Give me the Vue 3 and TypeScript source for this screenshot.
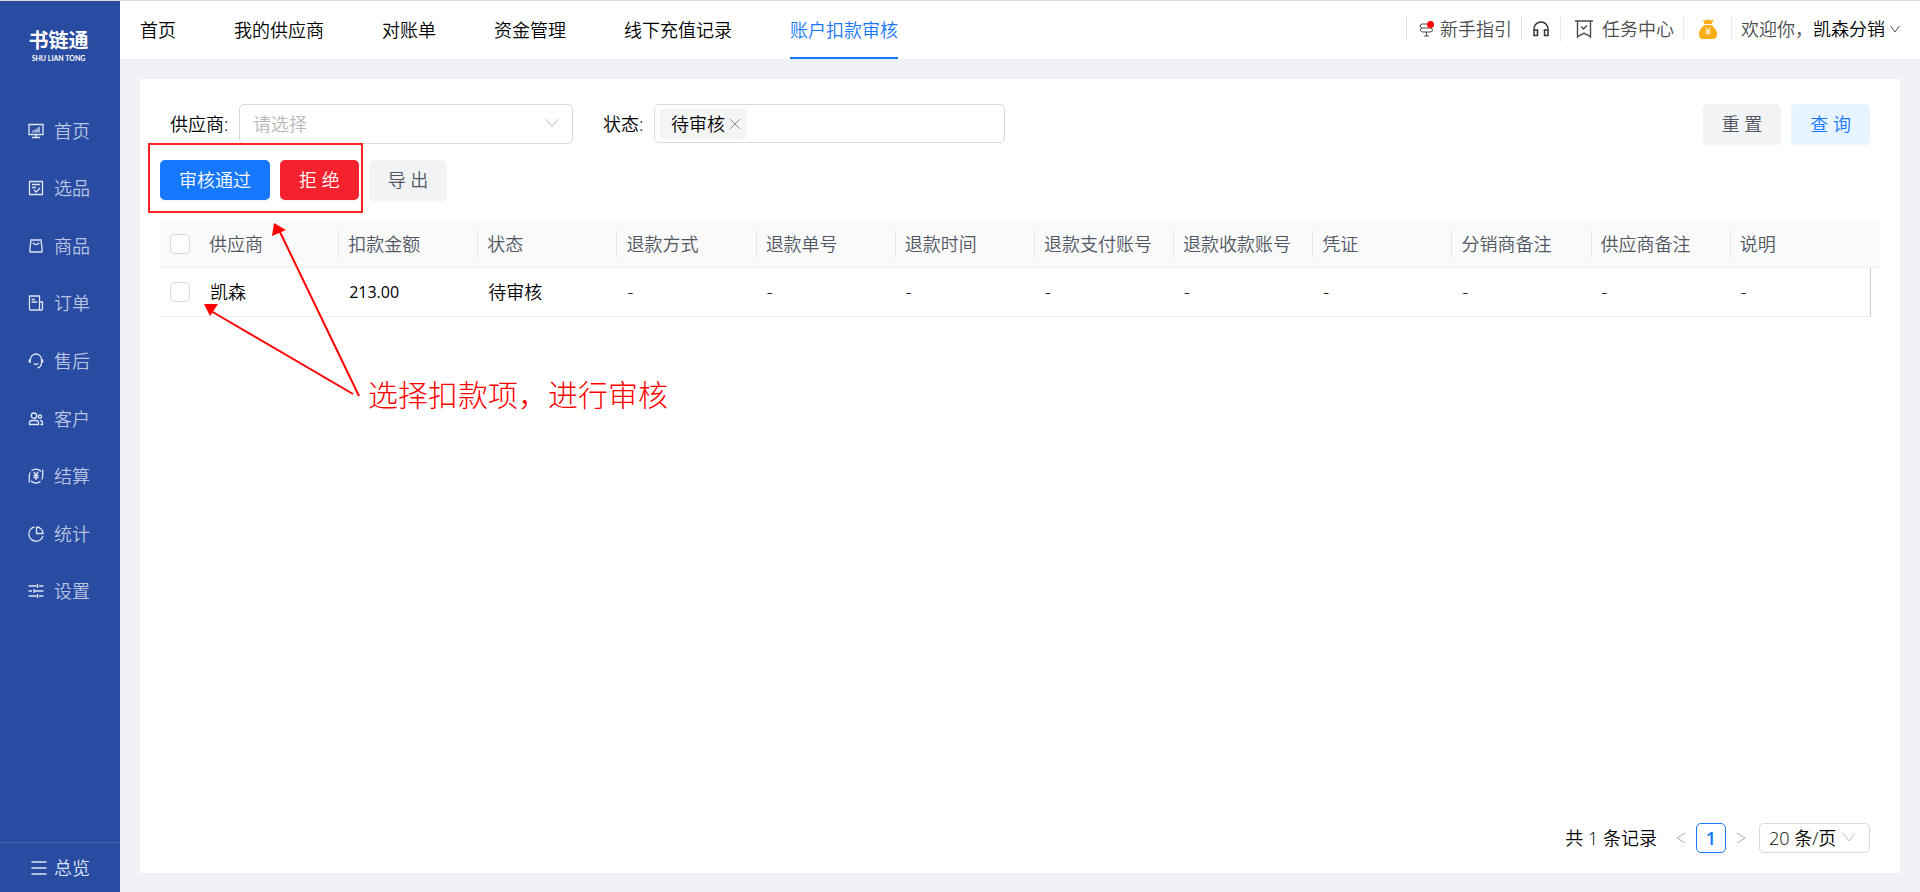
<script setup lang="ts">
import { ref } from 'vue'

interface MenuItem {
  label: string
  icon: string
}

const menu: MenuItem[] = [
  { label: '首页', icon: 'M1 1.500h14v10H1zM8 11.500v2.500M4 14.500h8M5 9.500V7.500M7 9.500V6.500M9 9.500V5.500M11 9.500V4' },
  { label: '选品', icon: 'M1.500 1.500h13v13h-13zM4 4.500h8M4 7.500h4M6 10l2.200 2L12 8' },
  { label: '商品', icon: 'M3 2h10l1.300 11q.1 1-.9 1H2.600q-1 0-.9-1zM4.800 4.800Q8 8.500 11.200 4.800' },
  { label: '订单', icon: 'M1.500 1h10v14H2.500q-1 0-1-1zM11.500 7h3v7q0 1-1 1h-2M3.700 4.500H7M3.700 7h5.600' },
  { label: '售后', icon: 'M2.500 6.500a5.500 5.500 0 0 1 11 0v3q0 4.500-4 5.500M1.300 6.500v3M2.200 6v4M13.800 6v4M14.700 6.500v3M5.700 10.500q2.300 1.800 4.600 0' },
  { label: '客户', icon: 'M6 2a2.700 2.700 0 1 1 0 5.400a2.700 2.700 0 1 1 0-5.400zM1.500 13.500v-1.500q0-2.500 2.500-2.500h4q2.500 0 2.500 2.500v1.500zM12 4a1.600 1.600 0 1 1 0 3.200a1.600 1.600 0 1 1 0-3.200M12.200 9.500q2.300.3 2.300 2.500v1.500h-2' },
  { label: '结算', icon: 'M3.500 2.700a6.800 6.800 0 0 1 9.500.8M14.700 1.500V8M1.300 8v6.500M3 12.800a6.800 6.800 0 0 0 9.500.5M1.300 8q0-2 1-3.500M14.700 8q0 2-1 3.500M5.800 4L8 7l2.200-3M8 7v5M5.500 7.500h5M5.500 9.500h5' },
  { label: '统计', icon: 'M6.500 1A7.200 7.200 0 1 0 15 9.800M8.500 1v6.500H15A6.500 6.500 0 0 0 8.500 1' },
  { label: '设置', icon: 'M.5 3h8M11 3h4.500M9.500 1v4M.5 8H4M6.500 8h9M6 6v4M.5 13h8M11 13h4.500M9.500 11v4' },
]

const tabs = ['首页', '我的供应商', '对账单', '资金管理', '线下充值记录', '账户扣款审核']
const activeTab = '账户扣款审核'

const columns = [
  '供应商', '扣款金额', '状态', '退款方式', '退款单号', '退款时间',
  '退款支付账号', '退款收款账号', '凭证', '分销商备注', '供应商备注', '说明',
]
const rows = [['凯森', '213.00', '待审核', '-', '-', '-', '-', '-', '-', '-', '-', '-']]

const supplier = ref('')
const pageSize = ref('20')
const checkedAll = ref(false)
const checked = ref<boolean[]>([false])
</script>

<template>
  <div class="page">
    <aside class="sidebar">
      <div class="logo">
        <span class="logo-name">书链通</span>
        <span class="logo-sub">SHU LIAN TONG</span>
      </div>
      <nav class="menu">
        <a v-for="item in menu" :key="item.label" href="#" class="menu-item">
          <svg class="menu-icon" viewBox="0 0 16 16"><path :d="item.icon" /></svg>
          <span>{{ item.label }}</span>
        </a>
      </nav>
      <a href="#" class="overview">
        <svg class="menu-icon" viewBox="0 0 16 16"><path d="M.5 2h15M.5 8h15M.5 14h15" /></svg>
        <span>总览</span>
      </a>
    </aside>

    <div class="main">
      <header class="header">
        <nav class="tabs">
          <a v-for="tab in tabs" :key="tab" href="#" class="tab" :class="{ active: tab === activeTab }">{{ tab }}</a>
        </nav>
        <div class="tools">
          <a href="#" class="tool guide">
            <svg class="guide-icon" viewBox="0 0 15 16">
              <path d="M12 3H3.500Q1 3 1 5t2.500 2H11q2.500 0 2.500 2T11 11H3L1 9l2-2M7.500 11v4M5 15h5" />
              <circle cx="11.500" cy="3.500" r="3.500" />
            </svg>
            <span>新手指引</span>
          </a>
          <a href="#" class="tool phones" aria-label="客服">
            <svg class="phones-icon" viewBox="0 0 16 16">
              <path d="M1 14V8a7 7 0 0 1 14 0v6M1 9h3.500v5.500H1zM15 9h-3.500v5.500H15z" />
            </svg>
          </a>
          <a href="#" class="tool task">
            <svg class="task-icon" viewBox="0 0 18 18">
              <path d="M0 1h18M2.500 1v16l3.500-2.500h1L9 13l2 1.500h1l3.500 2.500V1M6.200 6.500L8.500 9L12 5.500" />
            </svg>
            <span>任务中心</span>
          </a>
          <a href="#" class="tool money" aria-label="资金">
            <svg class="money-icon" viewBox="0 0 18 20">
              <path class="bag" d="M4 1q2 0 3 .5Q9-.5 11 1.500q1.500-.8 3.500-.5L12.500 5h-7zM5.500 6h7Q18 10.500 18 15t-4 5H4q-4 0-4-5t5.500-9z" />
              <path class="yen" d="M6.500 8.500L9 11.500l2.500-3M9 11.500V16M6.500 12h5M6.500 14h5" />
            </svg>
          </a>
          <a href="#" class="tool user">
            <span>欢迎你，</span><span class="user-name">凯森分销</span>
            <svg class="user-arrow" viewBox="0 0 10 8"><path d="M.5 1L5 7l4.500-6" /></svg>
          </a>
        </div>
      </header>

      <main class="card">
        <form class="filters" @submit.prevent>
          <label for="supplier" class="label-supplier">供应商:</label>
          <div class="select-wrap supplier">
            <select id="supplier" v-model="supplier" class="select">
              <option value="">请选择</option>
              <option value="ks">凯森</option>
            </select>
            <svg class="arrow" viewBox="0 0 14 10"><path d="M1 1l6 8 6-8" /></svg>
          </div>
          <label for="status" class="label-status">状态:</label>
          <div class="tag-box">
            <span class="tag">待审核
              <button type="button" class="tag-close" aria-label="移除">
                <svg viewBox="0 0 10 10"><path d="M0 0l10 10M10 0L0 10" /></svg>
              </button>
            </span>
            <input id="status" type="text" class="tag-input" />
          </div>
          <div class="filter-actions">
            <button type="reset" class="btn plain">重 置</button>
            <button type="submit" class="btn query">查 询</button>
          </div>
        </form>

        <div class="actions">
          <button type="button" class="btn primary">审核通过</button>
          <button type="button" class="btn danger">拒 绝</button>
          <button type="button" class="btn plain">导 出</button>
        </div>

        <table class="table">
          <thead>
            <tr>
              <th class="col-check"><input v-model="checkedAll" type="checkbox" class="check" aria-label="全选" /></th>
              <th v-for="col in columns" :key="col"><div class="th-text">{{ col }}</div></th>
              <th class="gutter"></th>
            </tr>
          </thead>
          <tbody>
            <tr v-for="(row, r) in rows" :key="r">
              <td class="col-check"><input v-model="checked[r]" type="checkbox" class="check" aria-label="选择凯森" /></td>
              <td v-for="(cell, c) in row" :key="c" :class="{ num: c === 1 }">{{ cell }}</td>
              <td class="gutter"></td>
            </tr>
          </tbody>
        </table>

        <footer class="pager">
          <span class="total">共 1 条记录</span>
          <button type="button" class="page-step" aria-label="上一页">
            <svg viewBox="0 0 10 12"><path d="M9 1L1 6l8 5" /></svg>
          </button>
          <button type="button" class="page-no">1</button>
          <button type="button" class="page-step" aria-label="下一页">
            <svg viewBox="0 0 10 12"><path d="M1 1l8 5-8 5" /></svg>
          </button>
          <div class="select-wrap size">
            <select v-model="pageSize" class="select small" aria-label="每页条数">
              <option value="20">20 条/页</option>
              <option value="50">50 条/页</option>
            </select>
            <svg class="arrow" viewBox="0 0 14 10"><path d="M1 1l6 8 6-8" /></svg>
          </div>
        </footer>

        <div class="note-frame"></div>
        <svg class="note-arrows" viewBox="0 0 180 190">
          <path class="line" d="M168 182L89 18M162 180L20 97" />
          <path class="head" d="M83 9l12 7-14 6zM13 90h14l-8 12z" />
        </svg>
        <p class="note-text">选择扣款项，进行审核</p>
      </main>
    </div>
  </div>
</template>

<style>
body {
  margin: 0;
}
</style>

<style scoped>
* {
  box-sizing: border-box;
}

.page {
  display: flex;
  min-height: 100vh;
  border-top: 1px solid #d9d9d9;
  background: #f0f1f6;
  color: #000;
  font-family: "Open Sans", "Noto Sans CJK SC", sans-serif;
  font-size: 18px;
  font-weight: 350;
  line-height: 24px;
}

button,
input,
select {
  font: inherit;
  color: inherit;
}

button {
  padding: 0;
  border: 0;
  background: none;
  cursor: pointer;
}

a {
  color: inherit;
  text-decoration: none;
}

svg {
  display: block;
  flex: none;
  fill: none;
  stroke: currentColor;
}

/* sidebar */
.sidebar {
  display: flex;
  flex: none;
  flex-direction: column;
  width: 120px;
  background: #294ba2;
  color: #b8c4e2;
}

.logo {
  display: flex;
  flex-direction: column;
  align-items: center;
  height: 101px;
  padding: 27px 3px 0 0;
  color: #fff;
}

.logo-name {
  font-size: 20px;
  font-weight: 700;
  line-height: 26px;
}

.logo-sub {
  font-family: Lato, sans-serif;
  font-size: 7px;
  font-weight: 700;
  line-height: 8px;
  white-space: nowrap;
}

.menu {
  display: flex;
  flex-direction: column;
  height: 518px;
}

.menu-item {
  display: flex;
  flex: 1;
  align-items: center;
  gap: 10px;
  padding-left: 28px;
}

.menu-icon {
  width: 16px;
  height: 16px;
  color: #dfe5f3;
  stroke-width: 1.3;
}

.overview {
  display: flex;
  align-items: center;
  gap: 7px;
  height: 50px;
  margin-top: auto;
  padding-left: 31px;
  border-top: 1px solid #4865b0;
  color: #dfe5f3;
}

/* header */
.main {
  display: flex;
  flex: 1;
  flex-direction: column;
  min-width: 0;
}

.header {
  display: flex;
  justify-content: space-between;
  height: 58px;
  padding: 0 20px;
  background: #fff;
}

.tabs {
  display: flex;
  gap: 58px;
}

.tab {
  padding-top: 17px;
  white-space: nowrap;
}

.tab.active {
  border-bottom: 2px solid #1677ff;
  color: #1677ff;
}

.tools {
  display: flex;
  height: 25px;
  margin-top: 15px;
  color: #4c4c4c;
  white-space: nowrap;
}

.tool {
  display: flex;
  align-items: center;
  border-left: 1px solid #e8e8e8;
}

.guide {
  gap: 6px;
  padding: 0 9px 0 12px;
}

.guide-icon {
  width: 15px;
  height: 16px;
}

.guide-icon circle {
  fill: #f00;
  stroke: none;
}

.phones {
  padding: 0 11px;
  color: #333;
}

.phones-icon {
  width: 16px;
  height: 16px;
  stroke-width: 1.5;
}

.task {
  gap: 9px;
  padding: 0 9px 0 14px;
}

.task-icon {
  width: 18px;
  height: 18px;
  stroke-width: 1.4;
}

.money {
  padding: 0 14px 0 15px;
}

.money-icon {
  width: 18px;
  height: 20px;
}

.bag {
  fill: #faad14;
  stroke: none;
}

.yen {
  stroke: #fff;
}

.user {
  padding-left: 9px;
}

.user-name {
  color: #000;
}

.user-arrow {
  width: 10px;
  height: 8px;
  margin-left: 5px;
}

/* card */
.card {
  position: relative;
  display: flex;
  flex: 1;
  flex-direction: column;
  margin: 20px 20px 19px;
  padding: 25px 20px 20px;
  background: #fff;
}

.filters {
  display: flex;
  align-items: flex-start;
  padding: 0 10px;
}

.filters label {
  flex: none;
  line-height: 40px;
}

.label-supplier {
  width: 69px;
}

.label-status {
  width: 51px;
  margin-left: 30px;
}

.select-wrap {
  position: relative;
}

.supplier {
  flex: 0 1 334px;
  color: #b8b8b8;
}

.select {
  display: block;
  width: 100%;
  height: 40px;
  padding: 0 13px;
  border: 1px solid #d9d9d9;
  border-radius: 5px;
  background: #fff;
  appearance: none;
}

.arrow {
  position: absolute;
  top: 50%;
  right: 14px;
  width: 14px;
  height: 10px;
  margin-top: -6px;
  color: #bfbfbf;
  pointer-events: none;
}

.tag-box {
  display: flex;
  flex: 0 1 351px;
  align-items: center;
  height: 39px;
  padding: 0 5px;
  border: 1px solid #d9d9d9;
  border-radius: 5px;
}

.tag {
  display: flex;
  flex: none;
  align-items: center;
  gap: 5px;
  height: 30px;
  padding: 0 6px 0 10px;
  border: 1px solid #f0f0f0;
  border-radius: 5px;
  background: #f5f5f5;
}

.tag-close svg {
  width: 10px;
  height: 10px;
  color: #8c8c8c;
}

.tag-input {
  flex: 1;
  min-width: 0;
  border: 0;
  outline: 0;
  background: none;
}

.filter-actions {
  display: flex;
  gap: 10px;
  margin-left: auto;
}

.actions {
  display: flex;
  gap: 10px;
  margin-top: 16px;
}

.btn {
  height: 40px;
  padding: 0 19px;
  border-radius: 5px;
  box-shadow: 0 2px 0 rgba(0, 0, 0, 0.03);
  white-space: nowrap;
}

.plain {
  background: #f2f3f5;
  color: #505662;
}

.query {
  background: #e6f4ff;
  color: #1677ff;
}

.primary {
  background: #1677ff;
  color: #fff;
}

.danger {
  background: #f5222d;
  color: #fff;
}

/* table */
.table {
  width: 100%;
  margin-top: 20px;
  border-collapse: separate;
  border-spacing: 0;
  table-layout: fixed;
}

.table th,
.table td {
  height: 49px;
  padding: 0 0 0 10px;
  border-bottom: 1px solid #f0f0f0;
  font-weight: 350;
  text-align: left;
  white-space: nowrap;
}

.table th {
  height: 48px;
  padding-left: 0;
  background: #fafafa;
  color: #505662;
}

.th-text {
  padding-left: 9px;
  border-right: 1px solid #e8e8e8;
  line-height: 28px;
}

.table th:nth-last-child(2) .th-text {
  border-right: 0;
}

.table .col-check {
  width: 40px;
  padding-left: 10px;
}

.table .gutter {
  width: 10px;
  padding: 0;
}

.table th:first-child {
  border-top-left-radius: 5px;
}

.table th:last-child {
  border-top-right-radius: 5px;
}

.table td.gutter {
  border-bottom: 0;
  border-left: 1px solid #d0d0d0;
}

.table td.num {
  font-size: 16px;
  font-weight: 400;
}

.check {
  display: block;
  width: 20px;
  height: 20px;
  margin: 0;
  border: 1px solid #d9d9d9;
  border-radius: 5px;
  background: #fff;
  appearance: none;
}

.check:checked {
  border-color: #1677ff;
  background: #1677ff;
}

/* pagination */
.pager {
  display: flex;
  align-items: center;
  justify-content: flex-end;
  margin-top: auto;
  padding-right: 10px;
}

.total {
  margin-right: 9px;
}

.page-step {
  display: flex;
  align-items: center;
  justify-content: center;
  width: 30px;
  height: 30px;
  color: #b0b0b0;
}

.page-step svg {
  width: 10px;
  height: 12px;
}

.page-no {
  width: 30px;
  height: 30px;
  border: 1px solid #1677ff;
  border-radius: 5px;
  color: #1677ff;
  font-weight: 600;
}

.size {
  width: 111px;
  margin-left: 3px;
}

.small {
  height: 30px;
  padding: 0 9px;
}

/* annotation laid over the page */
.note-frame {
  position: absolute;
  top: 64px;
  left: 8px;
  width: 215px;
  height: 70px;
  border: 2px solid #f22;
  pointer-events: none;
}

.note-arrows {
  position: absolute;
  top: 135px;
  left: 51px;
  width: 180px;
  height: 190px;
  pointer-events: none;
}

.line {
  stroke: #f00;
  stroke-width: 2;
}

.head {
  fill: #f00;
  stroke: none;
}

.note-text {
  position: absolute;
  top: 294px;
  left: 228px;
  margin: 0;
  color: #f00;
  font-family: "Noto Sans CJK SC", sans-serif;
  font-size: 30px;
  font-weight: 300;
  line-height: 40px;
  white-space: nowrap;
}
</style>
